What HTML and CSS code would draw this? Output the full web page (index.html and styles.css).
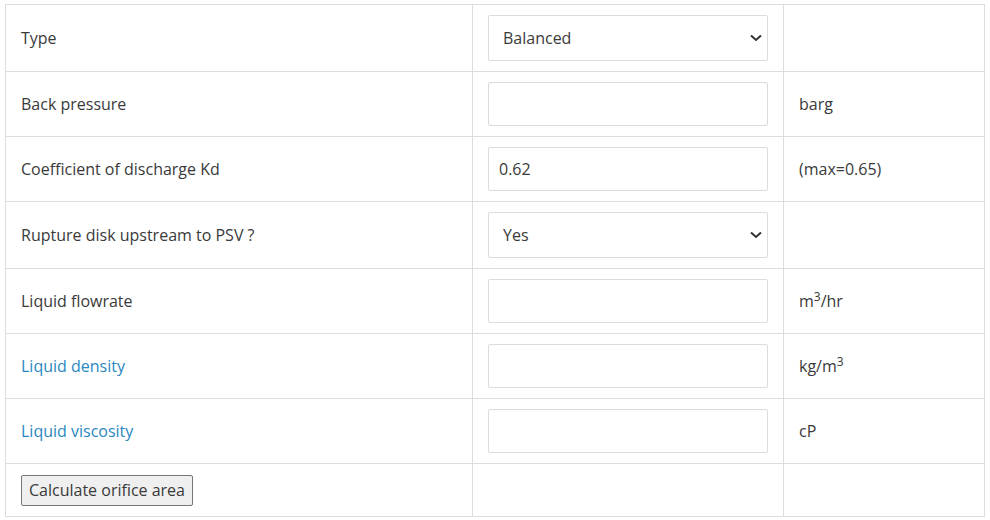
FILE: index.html
```html
<!DOCTYPE html>
<html lang="en">
<head>
    <meta charset="UTF-8">
    <meta name="viewport" content="width=device-width, initial-scale=1.0">
    <title>Liquid relief orifice</title>
    <link rel="stylesheet" href="styles.css">
</head>
<body>
    <table class="calc">
        <tr>
            <td class="label">Type</td>
            <td class="field">
                <div class="select-wrap">
                    <select>
                        <option>Balanced</option>
                        <option>Conventional</option>
                    </select>
                    <svg class="chevron" width="12" height="8" viewBox="0 0 12 8"><path d="M1 1.5l5 4.5 5-4.5" fill="none" stroke="#333" stroke-width="2"/></svg>
                </div>
            </td>
            <td class="unit"></td>
        </tr>
        <tr>
            <td class="label">Back pressure</td>
            <td class="field"><input type="text"></td>
            <td class="unit">barg</td>
        </tr>
        <tr>
            <td class="label">Coefficient of discharge Kd</td>
            <td class="field"><input type="text" value="0.62"></td>
            <td class="unit">(max=0.65)</td>
        </tr>
        <tr>
            <td class="label">Rupture disk upstream to PSV ?</td>
            <td class="field">
                <div class="select-wrap">
                    <select>
                        <option>Yes</option>
                        <option>No</option>
                    </select>
                    <svg class="chevron" width="12" height="8" viewBox="0 0 12 8"><path d="M1 1.5l5 4.5 5-4.5" fill="none" stroke="#333" stroke-width="2"/></svg>
                </div>
            </td>
            <td class="unit"></td>
        </tr>
        <tr>
            <td class="label">Liquid flowrate</td>
            <td class="field"><input type="text"></td>
            <td class="unit">m<sup>3</sup>/hr</td>
        </tr>
        <tr>
            <td class="label"><a href="#">Liquid density</a></td>
            <td class="field"><input type="text"></td>
            <td class="unit">kg/m<sup>3</sup></td>
        </tr>
        <tr>
            <td class="label"><a href="#">Liquid viscosity</a></td>
            <td class="field"><input type="text"></td>
            <td class="unit">cP</td>
        </tr>
        <tr>
            <td class="label"><button class="btn">Calculate orifice area</button></td>
            <td class="field"></td>
            <td class="unit"></td>
        </tr>
    </table>
</body>
</html>
```

FILE: styles.css
```css
body {
    font-family: "Open Sans", Arial, sans-serif;
    font-size: 16px;
    color: #3a3a3a;
    margin: 0;
    padding: 4px 5px;
    background: #fff;
}

.calc {
    border-collapse: collapse;
    width: 980px;
}

.calc td {
    border: 1px solid #ddd;
    padding: 10px 15px;
    vertical-align: middle;
    line-height: 24px;
}

.label {
    width: 436px;
}

.field {
    width: 280px;
}

.unit {
    width: 170px;
}

.calc a {
    color: #2a88c0;
    text-decoration: none;
}

sup {
    font-size: 12px;
    line-height: 0;
    vertical-align: 6px;
}

input,
select {
    display: block;
    box-sizing: border-box;
    width: 280px;
    border: 1px solid #dcdcdc;
    border-radius: 2px;
    background: #fff;
    font-family: "Open Sans", Arial, sans-serif;
    font-size: 16px;
    color: #3a3a3a;
    margin: 0;
}

input {
    height: 44px;
    padding: 0 10px;
}

.select-wrap {
    position: relative;
}

select {
    height: 46px;
    padding: 0 30px 0 14px;
    appearance: none;
    -webkit-appearance: none;
}

.chevron {
    position: absolute;
    right: 6px;
    top: 19px;
    pointer-events: none;
}

.btn {
    font-family: "Open Sans", Arial, sans-serif;
    font-size: 16px;
    color: #3a3a3a;
    background: #efefef;
    border: 1px solid #767676;
    border-radius: 2px;
    padding: 0 7px 2px;
    height: 31px;
    margin: 1px 0 0;
}
```
